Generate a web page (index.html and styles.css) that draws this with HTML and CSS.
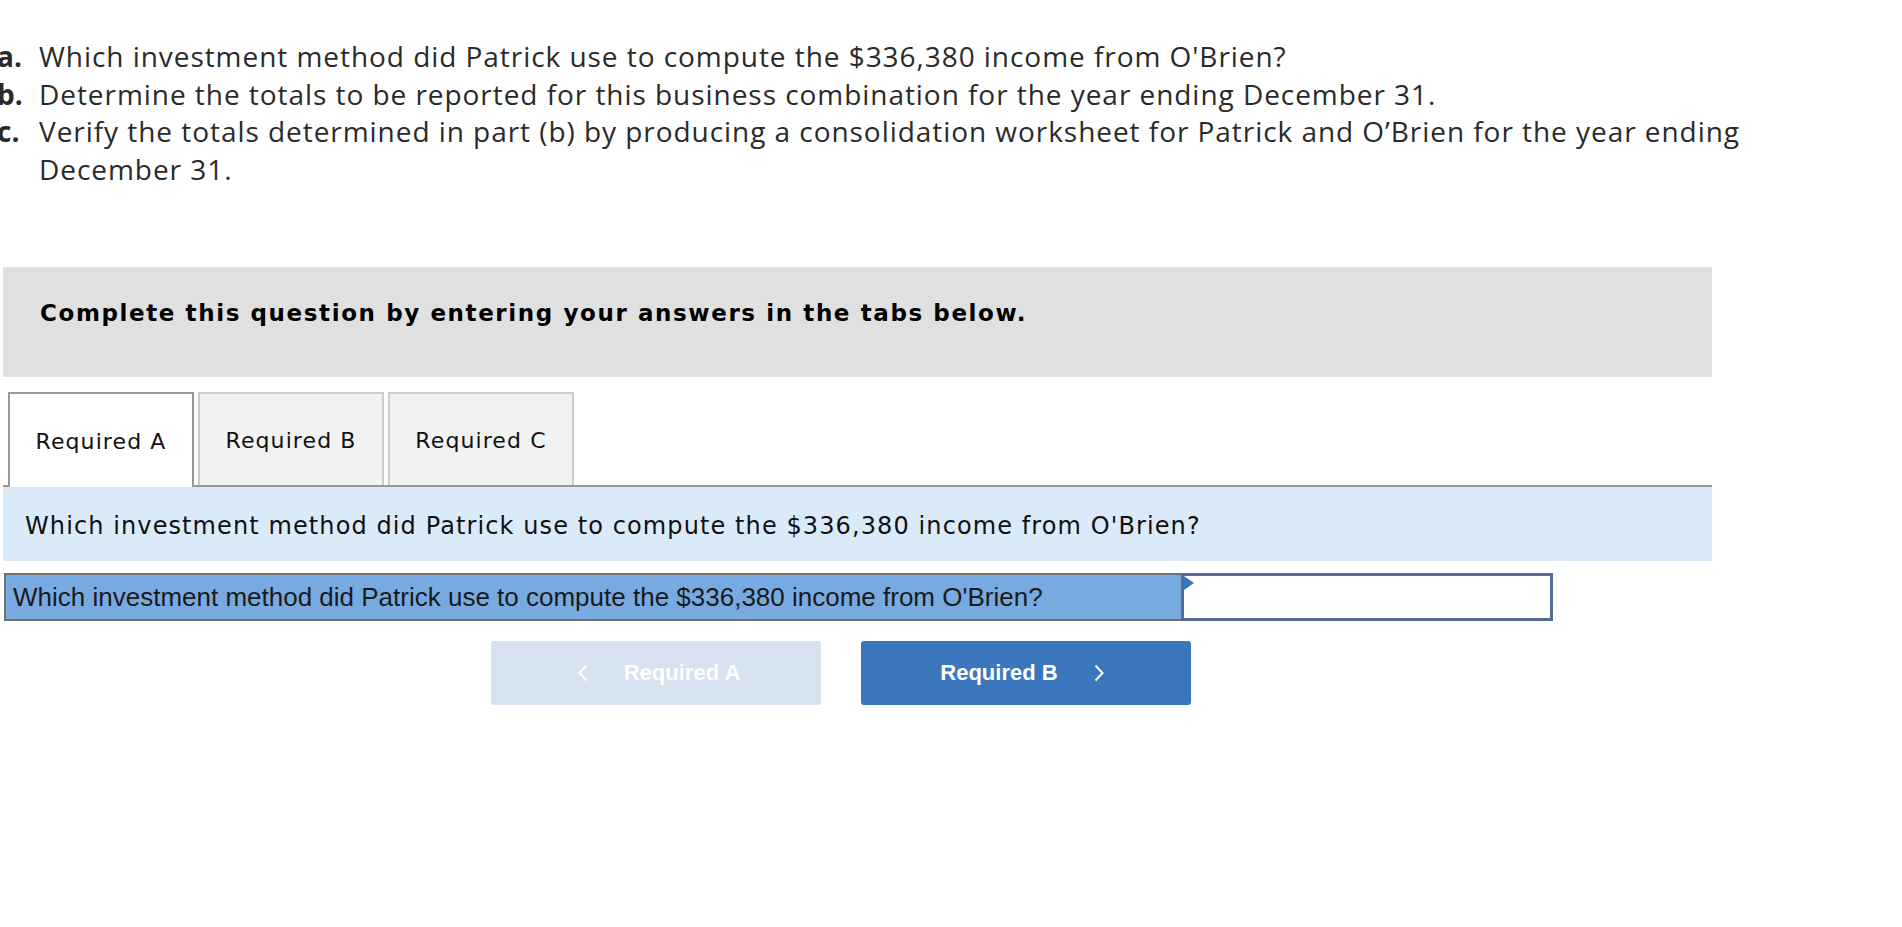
FILE: index.html
```html
<!DOCTYPE html>
<html>
<head>
<meta charset="utf-8">
<link rel="stylesheet" href="styles.css">
</head>
<body>
<ol class="problem">
  <li><span class="lbl">a.</span>Which investment method did Patrick use to compute the $336,380 income from O'Brien?</li>
  <li><span class="lbl">b.</span>Determine the totals to be reported for this business combination for the year ending December 31.</li>
  <li><span class="lbl">c.</span>Verify the totals determined in part (b) by producing a consolidation worksheet for Patrick and O’Brien for the year ending December 31.</li>
</ol>
<div class="main">
  <div class="instructions">Complete this question by entering your answers in the tabs below.</div>
  <div class="tabs">
    <div class="tab active">Required A</div>
    <div class="tab">Required B</div>
    <div class="tab">Required C</div>
  </div>
  <div class="question">Which investment method did Patrick use to compute the $336,380 income from O'Brien?</div>
  <div class="answer-row">
    <div class="answer-label">Which investment method did Patrick use to compute the $336,380 income from O'Brien?</div>
    <div class="answer-select"><span class="tri"></span></div>
  </div>
  <div class="nav">
    <button class="btn prev"><svg class="chev left" width="10" height="18" viewBox="0 0 10 18"><polyline points="8.5,1.5 1.5,9 8.5,16.5" fill="none" stroke="#fff" stroke-width="2"/></svg>Required A</button>
    <button class="btn next">Required B<svg class="chev right" width="10" height="18" viewBox="0 0 10 18"><polyline points="1.5,1.5 8.5,9 1.5,16.5" fill="none" stroke="#fff" stroke-width="2"/></svg></button>
  </div>
</div>
</body>
</html>
```
FILE: styles.css
```css
html, body { margin: 0; padding: 0; background: #fff; }
body { overflow: hidden; }

.problem {
  list-style: none;
  margin: 38px 0 0 0;
  padding: 0 0 0 39px;
  width: 1720px;
  font-family: "Open Sans", Lato, sans-serif;
  font-size: 28px;
  letter-spacing: 0.95px;
  line-height: 37.6px;
  color: #2a2a2a;
}
.problem li { position: relative; }
.problem .lbl {
  position: absolute;
  left: -42px;
  font-weight: 700;
  letter-spacing: 0;
}

.main {
  margin: 79px 0 0 3px;
  width: 1709px;
}

.instructions {
  background: #e0e0e0;
  height: 110px;
  box-sizing: border-box;
  padding: 31px 0 0 37px;
  font-family: "DejaVu Sans", Verdana, sans-serif;
  font-weight: 700;
  font-size: 23px;
  letter-spacing: 1.6px;
  line-height: 30px;
  color: #000;
}

.tabs {
  margin-top: 15px;
  display: flex;
  gap: 4px;
  padding-left: 5px;
  border-bottom: 2px solid #999;
  height: 93px;
}
.tab {
  width: 186px;
  box-sizing: border-box;
  height: 93px;
  border: 2px solid #ccc;
  border-bottom: none;
  background: #f2f2f2;
  display: flex;
  align-items: center;
  justify-content: center;
  font-family: "DejaVu Sans", Verdana, sans-serif;
  font-size: 22px;
  letter-spacing: 1.1px;
  color: #111;
  padding-top: 2px;
}
.tab.active {
  background: #fff;
  border-color: #999;
  height: 95px;
  position: relative;
  z-index: 1;
}

.question {
  background: #dbeaf9;
  height: 74px;
  display: flex;
  align-items: center;
  padding: 3px 0 0 22px;
  box-sizing: border-box;
  font-family: "DejaVu Sans", Verdana, sans-serif;
  font-size: 24px;
  letter-spacing: 1.1px;
  color: #111;
}

.answer-row {
  margin: 12px 0 0 1px;
  display: flex;
  width: 1549px;
  height: 48px;
}
.answer-label {
  flex: 0 0 1177px;
  box-sizing: border-box;
  background: #78aae2;
  border: 2px solid #707070;
  border-right: none;
  display: flex;
  align-items: center;
  padding-left: 7px;
  font-family: "Liberation Sans", Arial, sans-serif;
  font-size: 26px;
  color: #1a1a1a;
  white-space: nowrap;
}
.answer-select {
  flex: 1;
  box-sizing: border-box;
  background: #fff;
  border: 3px solid #536d96;
  position: relative;
}
.tri {
  position: absolute;
  left: 0;
  top: 0;
  width: 0;
  height: 0;
  border-top: 7px solid transparent;
  border-bottom: 7px solid transparent;
  border-left: 10px solid #3b73b9;
}

.nav {
  margin-top: 20px;
  display: flex;
  gap: 40px;
  padding-left: 488px;
}
.btn {
  width: 330px;
  height: 64px;
  border: none;
  border-radius: 3px;
  font-family: "Liberation Sans", Arial, sans-serif;
  font-weight: 700;
  font-size: 22px;
  color: #fff;
  display: flex;
  align-items: center;
  justify-content: center;
  padding: 0;
}
.btn.prev { background: #d6e2f0; padding-left: 6px; }
.btn.next { background: #3b76bd; padding-right: 8px; }
.chev { display: block; }
.chev.left { margin-right: 36px; }
.chev.right { margin-left: 36px; }
```
